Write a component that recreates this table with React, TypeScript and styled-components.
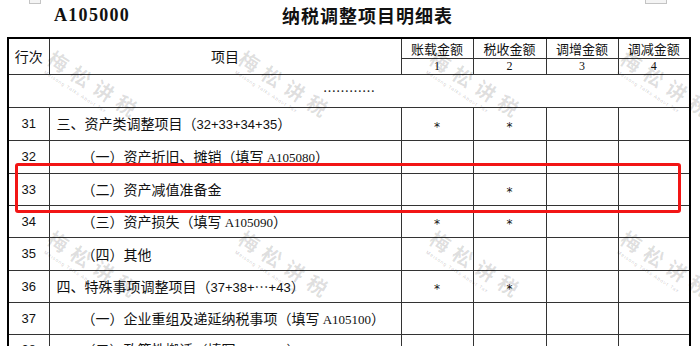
import React from "react";
import styled, { createGlobalStyle } from "styled-components";

const Global = createGlobalStyle`
  html, body { margin: 0; padding: 0; background: #fff; }
  body { font-family: "Noto Sans CJK SC", sans-serif; }
`;

const Page = styled.div`
  position: relative;
  width: 700px;
  height: 346px;
  overflow: hidden;
  background: #fff;
  color: #111;
`;

const TitleBar = styled.header`
  display: flex;
  align-items: center;
  height: 37px;
  box-sizing: border-box;
  padding: 0 0 7px 54px;
`;

const FormCode = styled.div`
  font-family: "Liberation Serif", serif;
  font-weight: bold;
  font-size: 18px;
  letter-spacing: 1.3px;
  line-height: 1;
`;

const Title = styled.h1`
  margin: 0 0 0 152px;
  font-family: "Noto Sans CJK SC", sans-serif;
  font-weight: bold;
  font-size: 18px;
  letter-spacing: 1px;
  line-height: 1;
`;

const Sheet = styled.table`
  margin-left: 7px;
  border-collapse: collapse;
  table-layout: fixed;
  width: 684px;
  border: 2px solid #000;
`;

const Col = styled.col<{ $w: number }>`
  width: ${(p) => p.$w}px;
`;

const Row = styled.tr<{ $h: number }>`
  height: ${(p) => p.$h}px;
`;

const HeadCell = styled.th<{ $size?: number }>`
  border: 1px solid #333;
  padding: 0;
  font-weight: normal;
  font-size: ${(p) => p.$size ?? 14}px;
  line-height: 1;
  text-align: center;
  vertical-align: middle;
`;

const NumHead = styled(HeadCell)`
  font-family: "Liberation Serif", serif;
  font-size: 12px;
`;

const Cell = styled.td`
  border: 1px solid #333;
  padding: 0;
  font-size: 14px;
  line-height: 1;
  vertical-align: middle;
  white-space: nowrap;
  overflow: hidden;
`;

const LineNo = styled(Cell)`
  font-family: "Liberation Sans", sans-serif;
  font-size: 13px;
  text-align: center;
`;

const ItemCell = styled(Cell)<{ $level: number }>`
  padding-left: ${(p) => (p.$level === 1 ? 7 : 32)}px;
`;

const StarCell = styled(Cell)`
  text-align: center;
  font-family: "DejaVu Sans", sans-serif;
  font-size: 12px;
`;

const Star = styled.span`
  display: inline-block;
  padding-top: 6px;
`;

const Ellipsis = styled(Cell)`
  text-align: center;
  font-size: 13px;
  color: #222;
`;

const Code = styled.span`
  font-family: "Liberation Serif", serif;
  font-size: 13px;
`;

const Nums = styled.span`
  font-family: "Liberation Sans", sans-serif;
  font-size: 13px;
`;

const Highlight = styled.div`
  position: absolute;
  left: 15px;
  top: 163px;
  width: 666px;
  height: 50px;
  box-sizing: border-box;
  border: 3px solid #f21515;
  border-radius: 3px;
  pointer-events: none;
`;

const EdgeMark = styled.div<{ $left: number; $w: number }>`
  position: absolute;
  top: -6px;
  left: ${(p) => p.$left}px;
  width: ${(p) => p.$w}px;
  height: 10px;
  box-sizing: border-box;
  border: 1px solid #c4c4c4;
  background: #f4f4f4;
`;

const WatermarkLayer = styled.div`
  position: absolute;
  left: 50px;
  top: 46px;
  display: grid;
  grid-template-columns: repeat(4, 191px);
  grid-auto-rows: 180px;
  pointer-events: none;
`;

const Mark = styled.div`
  transform-origin: 0 10px;
  transform: rotate(33deg);
  white-space: nowrap;
`;

const MarkCn = styled.div`
  font-family: "Noto Sans CJK SC", sans-serif;
  font-weight: bold;
  font-size: 20px;
  line-height: 20px;
  letter-spacing: 7px;
  color: rgba(0, 0, 0, 0.13);
`;

const MarkEn = styled.div`
  font-family: "Liberation Sans", sans-serif;
  font-size: 5px;
  letter-spacing: 0.8px;
  margin: 3px 0 0 4px;
  color: rgba(0, 0, 0, 0.22);
`;

type Item = {
  no: string;
  level: number;
  text: React.ReactNode;
  s1?: boolean;
  s2?: boolean;
  h: number;
};

const items: Item[] = [
  {
    no: "31",
    level: 1,
    text: (
      <>
        三、资产类调整项目（<Nums>32+33+34+35</Nums>）
      </>
    ),
    s1: true,
    s2: true,
    h: 33,
  },
  {
    no: "32",
    level: 2,
    text: (
      <>
        （一）资产折旧、摊销（填写 <Code>A105080</Code>）
      </>
    ),
    h: 33,
  },
  { no: "33", level: 2, text: "（二）资产减值准备金", s2: true, h: 32 },
  {
    no: "34",
    level: 2,
    text: (
      <>
        （三）资产损失（填写 <Code>A105090</Code>）
      </>
    ),
    s1: true,
    s2: true,
    h: 32,
  },
  { no: "35", level: 2, text: "（四）其他", h: 33 },
  {
    no: "36",
    level: 1,
    text: (
      <>
        四、特殊事项调整项目（<Nums>37+38+</Nums>…<Nums>+43</Nums>）
      </>
    ),
    s1: true,
    s2: true,
    h: 32,
  },
  {
    no: "37",
    level: 2,
    text: (
      <>
        （一）企业重组及递延纳税事项（填写 <Code>A105100</Code>）
      </>
    ),
    h: 32,
  },
  {
    no: "38",
    level: 2,
    text: (
      <>
        （二）政策性搬迁（填写 <Code>A105110</Code>）
      </>
    ),
    h: 32,
  },
];

const App: React.FC = () => (
  <Page>
    <Global />
    <EdgeMark $left={29} $w={12} />
    <EdgeMark $left={645} $w={22} />
    <TitleBar>
      <FormCode>A105000</FormCode>
      <Title>纳税调整项目明细表</Title>
    </TitleBar>
    <Sheet>
      <colgroup>
        <Col $w={41} />
        <Col $w={352} />
        <Col $w={72} />
        <Col $w={73} />
        <Col $w={72} />
        <Col $w={72} />
      </colgroup>
      <thead>
        <Row $h={20}>
          <HeadCell rowSpan={2}>行次</HeadCell>
          <HeadCell rowSpan={2}>项目</HeadCell>
          <HeadCell $size={13}>账载金额</HeadCell>
          <HeadCell $size={13}>税收金额</HeadCell>
          <HeadCell $size={13}>调增金额</HeadCell>
          <HeadCell $size={13}>调减金额</HeadCell>
        </Row>
        <Row $h={16}>
          <NumHead>1</NumHead>
          <NumHead>2</NumHead>
          <NumHead>3</NumHead>
          <NumHead>4</NumHead>
        </Row>
      </thead>
      <tbody>
        <Row $h={33}>
          <Ellipsis colSpan={6}>…………</Ellipsis>
        </Row>
        {items.map((it) => (
          <Row $h={it.h} key={it.no}>
            <LineNo>{it.no}</LineNo>
            <ItemCell $level={it.level}>{it.text}</ItemCell>
            <StarCell>{it.s1 ? <Star>*</Star> : null}</StarCell>
            <StarCell>{it.s2 ? <Star>*</Star> : null}</StarCell>
            <Cell />
            <Cell />
          </Row>
        ))}
      </tbody>
    </Sheet>
    <Highlight />
    <WatermarkLayer>
      {Array.from({ length: 8 }, (_, i) => (
        <Mark key={i}>
          <MarkCn>梅松讲税</MarkCn>
          <MarkEn>Meisong Talks About Tax</MarkEn>
        </Mark>
      ))}
    </WatermarkLayer>
  </Page>
);

export default App;
